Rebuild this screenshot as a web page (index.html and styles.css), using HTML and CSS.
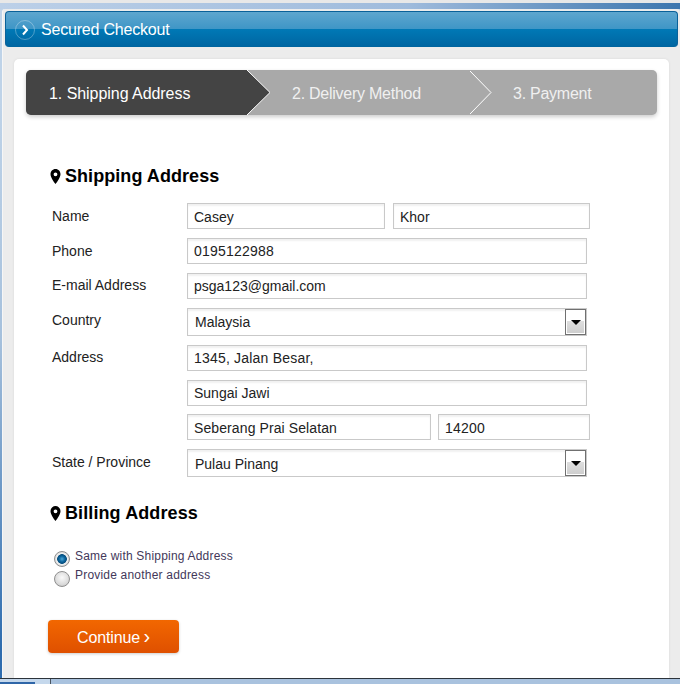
FILE: index.html
```html
<!DOCTYPE html>
<html lang="en">
<head>
  <meta charset="UTF-8">
  <title>Secured Checkout</title>
  <link rel="stylesheet" href="styles.css">
</head>
<body>
  <div class="top-edge"></div>
  <div class="top-strip"></div>

  <div class="window">
    <div class="page-header">
      <span class="header-icon">
        <svg width="20" height="20" viewBox="0 0 20 20"><path d="M8 5.500l4 4.500-4 4.500" fill="none" stroke="#fff" stroke-width="2"/></svg>
      </span>
      <span>Secured Checkout</span>
    </div>

    <div class="card">
      <div class="steps">
        <div class="step step-active">
          1. Shipping Address
          <svg class="step-arrow" width="24" height="45" viewBox="0 0 24 45"><path d="M0 0l23 22.500L0 45z" fill="#444"/><path d="M0 0l23 22.500L0 45" fill="none" stroke="#fff"/></svg>
        </div>
        <div class="step step-second">
          2. Delivery Method
          <svg class="step-arrow" width="24" height="45" viewBox="0 0 24 45"><path d="M0 1l21 21.500L0 44" fill="none" stroke="#fff"/></svg>
        </div>
        <div class="step step-third">3. Payment</div>
      </div>

      <h2 class="section-title">
        <svg class="pin" width="11" height="15" viewBox="0 0 11 15"><path fill-rule="evenodd" d="M5.500 0C2.600 0 .5 2.300.5 5.200.5 8.800 5.500 15 5.500 15s5-6.200 5-9.800C10.500 2.300 8.400 0 5.500 0zm0 3.400a1.900 1.900 0 1 1 0 3.800 1.900 1.900 0 0 1 0-3.800z"/></svg>
        Shipping Address
      </h2>

      <div class="form-grid">
        <label class="field-label">Name</label>
        <div class="field-pair">
          <input class="field field-first" type="text" value="Casey">
          <input class="field field-last" type="text" value="Khor">
        </div>

        <label class="field-label">Phone</label>
        <input class="field field-full field-digits" type="text" value="0195122988">

        <label class="field-label field-label-email">E-mail Address</label>
        <input class="field field-full" type="text" value="psga123@gmail.com">

        <label class="field-label field-label-select">Country</label>
        <div class="select-box">
          <span class="select-value">Malaysia</span>
          <span class="select-btn"><i class="select-arrow"></i></span>
        </div>

        <label class="field-label field-label-address">Address</label>
        <input class="field field-full field-digits" type="text" value="1345, Jalan Besar,">

        <span></span>
        <input class="field field-full" type="text" value="Sungai Jawi">

        <span class="row-tight"></span>
        <div class="field-pair row-tight">
          <input class="field field-city" type="text" value="Seberang Prai Selatan">
          <input class="field field-zip field-digits" type="text" value="14200">
        </div>

        <label class="field-label">State / Province</label>
        <div class="select-box select-box-low">
          <span class="select-value">Pulau Pinang</span>
          <span class="select-btn"><i class="select-arrow"></i></span>
        </div>
      </div>

      <h2 class="section-title section-billing">
        <svg class="pin" width="11" height="15" viewBox="0 0 11 15"><path fill-rule="evenodd" d="M5.500 0C2.600 0 .5 2.300.5 5.200.5 8.800 5.500 15 5.500 15s5-6.200 5-9.800C10.500 2.300 8.400 0 5.500 0zm0 3.400a1.900 1.900 0 1 1 0 3.800 1.900 1.900 0 0 1 0-3.800z"/></svg>
        Billing Address
      </h2>

      <div class="radio-group">
        <label class="radio-row"><input type="radio" name="billing" checked> Same with Shipping Address</label>
        <label class="radio-row"><input type="radio" name="billing"> Provide another address</label>
      </div>

      <button class="continue-btn">Continue <span class="btn-arrow">›</span></button>
    </div>
  </div>

  <div class="bottom-strip">
    <div class="bottom-tab"></div>
  </div>
</body>
</html>
```

FILE: styles.css
```css
html, body {
  height: 100%;
}
body {
  font-family: 'Liberation Sans', Arial, sans-serif;
  margin: 0;
  height: 684px;
  overflow: hidden;
  display: flex;
  flex-direction: column;
  background: linear-gradient(to bottom, #bfd3e8 15%, #a5c0dc 50%, #2e6cae 95%);
  color: #222;
}
.top-edge {
  height: 3px;
  background-color: #e8e8e8;
}
.top-strip {
  height: 6px;
  background: linear-gradient(to right, #bcd0e8, #9fbbdc 60%, #3d76ae);
}
.window {
  flex: 1;
  min-height: 0;
  margin-left: 2px;
  border-left: 1px solid #f6f6f6;
  padding: 2px 2px 0;
  background-color: #ececec;
  border-radius: 3px 3px 0 0;
  display: flex;
  flex-direction: column;
}
.page-header {
  height: 36px;
  box-sizing: border-box;
  display: flex;
  align-items: center;
  gap: 6px;
  padding-left: 9px;
  padding-top: 1px;
  color: #fff;
  font-size: 16px;
  letter-spacing: -0.2px;
  border: 1px solid #0a6199;
  border-bottom-color: #00659f;
  border-radius: 4px;
  background: linear-gradient(to bottom, #5ea6cf, #3f96c6 49%, #0079b6 50%, #0066a2);
}
.header-icon {
  width: 20px;
  height: 20px;
  border-radius: 50%;
  border: 1px solid rgba(255, 255, 255, 0.3);
  box-sizing: border-box;
  display: flex;
  align-items: center;
  justify-content: center;
}
.header-icon svg {
  flex: none;
}
.card {
  flex: 1;
  min-height: 0;
  margin: 12px 9px 0;
  padding: 11px 12px 0;
  background-color: #fff;
  border-radius: 5px 5px 0 0;
  box-shadow: 0 0 3px rgba(0, 0, 0, 0.08);
}
.steps {
  display: flex;
  height: 45px;
  border-radius: 5px;
  background-color: #a9a9a9;
  box-shadow: 0 2px 4px rgba(0, 0, 0, 0.2);
  color: #fff;
  font-size: 16px;
  line-height: 47px;
}
.step {
  position: relative;
  box-sizing: border-box;
}
.step-active {
  width: 221px;
  padding-left: 23px;
  letter-spacing: -0.05px;
  background-color: #444;
  border-radius: 5px 0 0 5px;
}
.step-second {
  width: 223px;
  padding-left: 45px;
  letter-spacing: -0.25px;
  color: #f0f0f0;
}
.step-third {
  padding-left: 43px;
  letter-spacing: -0.25px;
  color: #f0f0f0;
}
.step-arrow {
  position: absolute;
  top: 0;
  left: 100%;
  display: block;
}
.section-title {
  margin: 49px 0 15px 24px;
  font-size: 18px;
  line-height: 24px;
  font-weight: bold;
  letter-spacing: 0.06px;
  color: #000;
  display: flex;
  align-items: center;
  gap: 4px;
}
.section-billing {
  margin-top: 24px;
  margin-bottom: 0;
  letter-spacing: 0.1px;
}
.pin {
  flex: none;
}
.form-grid {
  margin-left: 26px;
  display: grid;
  grid-template-columns: 135px 403px;
  row-gap: 9px;
  font-size: 14px;
}
.field-label {
  line-height: 26px;
}
.field-label-email {
  line-height: 24px;
}
.field-label-select {
  line-height: 24px;
}
.field-label-address {
  line-height: 24px;
}
.field {
  font-family: 'Liberation Sans', Arial, sans-serif;
  font-size: 14px;
  color: #222;
  height: 26px;
  box-sizing: border-box;
  padding: 0 6px;
  border: 1px solid #c9c9c9;
  box-shadow: inset 0 2px 2px #f1f1f1;
  outline: none;
  display: block;
}
.field-digits {
  letter-spacing: 0.2px;
}
.field-full {
  width: 400px;
}
.field-pair {
  display: flex;
  gap: 8px;
}
.field-pair .field {
  padding-top: 2px;
}
.field-first {
  width: 198px;
}
.field-last {
  width: 197px;
}
.field-city {
  width: 244px;
  margin-right: -1px;
  letter-spacing: 0.1px;
}
.field-zip {
  width: 152px;
}
.row-tight {
  margin-top: -1px;
}
.select-box {
  width: 400px;
  height: 28px;
  box-sizing: border-box;
  padding-left: 7px;
  display: flex;
  align-items: center;
  justify-content: space-between;
  border: 1px solid #c9c9c9;
  box-shadow: inset 0 2px 2px #f1f1f1;
}
.select-box-low .select-value {
  padding-top: 2px;
}
.select-btn {
  width: 21px;
  height: 26px;
  box-sizing: border-box;
  border: 1px solid #707070;
  box-shadow: inset 0 0 0 1px #fff;
  background: linear-gradient(to bottom, #fff 47%, #dedede 47%, #cdcdcd);
  display: flex;
  justify-content: center;
  padding-top: 10px;
}
.select-arrow {
  display: block;
  width: 0;
  height: 0;
  border-left: 5px solid transparent;
  border-right: 5px solid transparent;
  border-top: 5px solid #000;
}
.radio-group {
  margin: 24px 0 0 28px;
  font-size: 12px;
  color: #43385a;
  letter-spacing: 0.2px;
}
.radio-row {
  display: flex;
  height: 19px;
  line-height: 14px;
  gap: 5px;
}
.radio-row input {
  appearance: none;
  -webkit-appearance: none;
  margin: 3px 0 0;
  width: 16px;
  height: 16px;
  flex: none;
  border-radius: 50%;
  border: 1px solid #8f8f8f;
  background: radial-gradient(circle at 50% 40%, #fafafa, #dcdcdc 60%, #bdbdbd);
}
.radio-row input:checked {
  margin-top: 2px;
  background: radial-gradient(circle at 50% 50%, #4aa8d8 0, #0a6199 3px, #08507f 4.500px, #f4f4f4 5.200px, #dadada 7px);
}
.continue-btn {
  display: block;
  margin: 33px 0 0 22px;
  width: 131px;
  height: 33px;
  padding: 2px 0 0;
  font-family: 'Liberation Sans', Arial, sans-serif;
  font-size: 16px;
  letter-spacing: -0.1px;
  color: #fff;
  border: none;
  border-radius: 4px;
  background: linear-gradient(to bottom, #f26700, #df5000);
  box-shadow: 0 1px 3px rgba(0, 0, 0, 0.2);
}
.btn-arrow {
  font-size: 20px;
  line-height: 0;
  margin-left: -1px;
}
.bottom-strip {
  height: 6px;
  border-top: 1px solid #2c333a;
  box-sizing: border-box;
  background-color: #a9c2de;
}
.bottom-tab {
  width: 51px;
  height: 5px;
  box-sizing: border-box;
  border-right: 1px solid #4a5560;
  background: linear-gradient(to right, #2f66a8 35px, #c5d8ec 35px);
  background-size: 100% 2px;
  background-position: bottom;
  background-repeat: no-repeat;
  background-color: #c5d8ec;
}
```
